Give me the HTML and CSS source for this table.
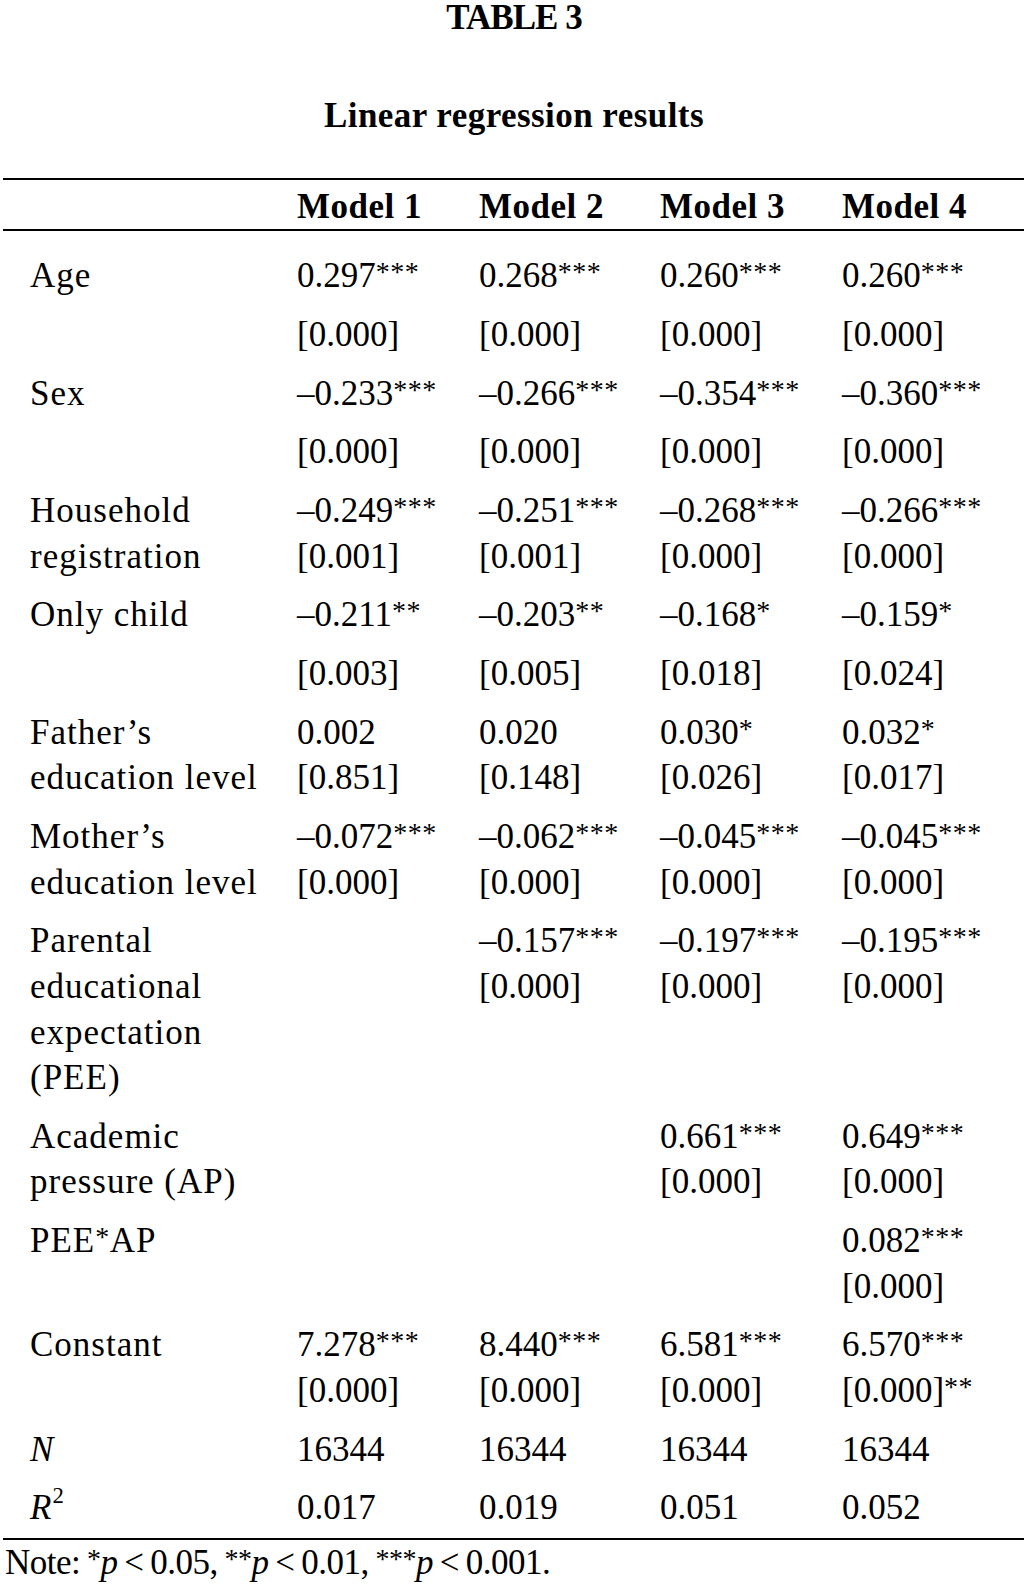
FILE: index.html
```html
<!DOCTYPE html>
<html lang="en">
<head>
<meta charset="utf-8">
<title>Table 3 – Linear regression results</title>
<link rel="stylesheet" href="styles.css">
</head>
<body>
<div class="page">
  <div class="title">TABLE 3</div>
  <div class="subtitle">Linear regression results</div>
  <table class="reg">
    <colgroup>
      <col class="c-label">
      <col class="c-m1">
      <col class="c-m2">
      <col class="c-m3">
      <col class="c-m4">
    </colgroup>
    <thead>
      <tr>
        <th class="lab"></th>
        <th>Model 1</th>
        <th>Model 2</th>
        <th>Model 3</th>
        <th>Model 4</th>
      </tr>
    </thead>
    <tbody>
      <tr class="first">
        <td class="lab">Age</td>
        <td>0.297<span class="s">***</span></td>
        <td>0.268<span class="s">***</span></td>
        <td>0.260<span class="s">***</span></td>
        <td>0.260<span class="s">***</span></td>
      </tr>
      <tr>
        <td class="lab"></td>
        <td>[0.000]</td>
        <td>[0.000]</td>
        <td>[0.000]</td>
        <td>[0.000]</td>
      </tr>
      <tr>
        <td class="lab">Sex</td>
        <td>–0.233<span class="s">***</span></td>
        <td>–0.266<span class="s">***</span></td>
        <td>–0.354<span class="s">***</span></td>
        <td>–0.360<span class="s">***</span></td>
      </tr>
      <tr>
        <td class="lab"></td>
        <td>[0.000]</td>
        <td>[0.000]</td>
        <td>[0.000]</td>
        <td>[0.000]</td>
      </tr>
      <tr>
        <td class="lab">Household<br>registration</td>
        <td>–0.249<span class="s">***</span><br>[0.001]</td>
        <td>–0.251<span class="s">***</span><br>[0.001]</td>
        <td>–0.268<span class="s">***</span><br>[0.000]</td>
        <td>–0.266<span class="s">***</span><br>[0.000]</td>
      </tr>
      <tr>
        <td class="lab">Only child</td>
        <td>–0.211<span class="s">**</span></td>
        <td>–0.203<span class="s">**</span></td>
        <td>–0.168<span class="s">*</span></td>
        <td>–0.159<span class="s">*</span></td>
      </tr>
      <tr>
        <td class="lab"></td>
        <td>[0.003]</td>
        <td>[0.005]</td>
        <td>[0.018]</td>
        <td>[0.024]</td>
      </tr>
      <tr>
        <td class="lab">Father’s<br>education level</td>
        <td>0.002<br>[0.851]</td>
        <td>0.020<br>[0.148]</td>
        <td>0.030<span class="s">*</span><br>[0.026]</td>
        <td>0.032<span class="s">*</span><br>[0.017]</td>
      </tr>
      <tr>
        <td class="lab">Mother’s<br>education level</td>
        <td>–0.072<span class="s">***</span><br>[0.000]</td>
        <td>–0.062<span class="s">***</span><br>[0.000]</td>
        <td>–0.045<span class="s">***</span><br>[0.000]</td>
        <td>–0.045<span class="s">***</span><br>[0.000]</td>
      </tr>
      <tr>
        <td class="lab">Parental<br>educational<br>expectation<br>(PEE)</td>
        <td></td>
        <td>–0.157<span class="s">***</span><br>[0.000]</td>
        <td>–0.197<span class="s">***</span><br>[0.000]</td>
        <td>–0.195<span class="s">***</span><br>[0.000]</td>
      </tr>
      <tr>
        <td class="lab">Academic<br>pressure (AP)</td>
        <td></td>
        <td></td>
        <td>0.661<span class="s">***</span><br>[0.000]</td>
        <td>0.649<span class="s">***</span><br>[0.000]</td>
      </tr>
      <tr>
        <td class="lab">PEE<span class="s">*</span>AP<br>&nbsp;</td>
        <td></td>
        <td></td>
        <td></td>
        <td>0.082<span class="s">***</span><br>[0.000]</td>
      </tr>
      <tr>
        <td class="lab">Constant</td>
        <td>7.278<span class="s">***</span><br>[0.000]</td>
        <td>8.440<span class="s">***</span><br>[0.000]</td>
        <td>6.581<span class="s">***</span><br>[0.000]</td>
        <td>6.570<span class="s">***</span><br>[0.000]<span class="s">**</span></td>
      </tr>
      <tr>
        <td class="lab"><i>N</i></td>
        <td>16344</td>
        <td>16344</td>
        <td>16344</td>
        <td>16344</td>
      </tr>
      <tr class="last">
        <td class="lab"><i>R</i><span class="sq">2</span></td>
        <td>0.017</td>
        <td>0.019</td>
        <td>0.051</td>
        <td>0.052</td>
      </tr>
    </tbody>
  </table>
  <p class="note">Note: <span class="s">*</span><i>p</i> &lt; 0.05, <span class="s">**</span><i>p</i> &lt; 0.01, <span class="s">***</span><i>p</i> &lt; 0.001.</p>
</div>
</body>
</html>
```
FILE: styles.css
```css
html, body {
  margin: 0;
  padding: 0;
  background: #ffffff;
}

body {
  font-family: "Liberation Serif", "Times New Roman", serif;
  font-size: 35px;
  color: #000000;
}

.page {
  width: 1028px;
}

.title {
  font-weight: bold;
  text-align: center;
  line-height: 35px;
  letter-spacing: -1px;
}

.subtitle {
  font-weight: bold;
  text-align: center;
  line-height: 33px;
  letter-spacing: 0.45px;
  margin-top: 64px;
}

.reg {
  margin: 46px 0 0 3px;
  width: 1021px;
  table-layout: fixed;
  border-collapse: separate;
  border-spacing: 0;
  line-height: 45.6px;
}

.c-label { width: 294px; }
.c-m1 { width: 182px; }
.c-m2 { width: 181px; }
.c-m3 { width: 182px; }
.c-m4 { width: 182px; }

.reg th,
.reg td {
  text-align: left;
  vertical-align: top;
  padding: 6.5px 0 6.6px 0;
  white-space: nowrap;
}

.reg th {
  font-weight: bold;
  letter-spacing: 0.5px;
  border-top: 2px solid #000;
  border-bottom: 2px solid #000;
  padding: 3.9px 0 0 0;
}

.reg .lab {
  padding-left: 27px;
  letter-spacing: 1px;
}

.reg tr.first td {
  padding-top: 21.9px;
}

.reg tr.last td {
  border-bottom: 2px solid #000;
}

.s {
  font-size: 0.8em;
  line-height: 0;
  vertical-align: 0.2em;
  letter-spacing: 0.5px;
}

.sq {
  font-size: 0.65em;
  line-height: 0;
  vertical-align: 0.7em;
}

.note {
  margin: 0 0 0 5px;
  line-height: 45.6px;
  letter-spacing: -0.5px;
  word-spacing: -1.5px;
}

.note .s {
  letter-spacing: -0.5px;
}
```
